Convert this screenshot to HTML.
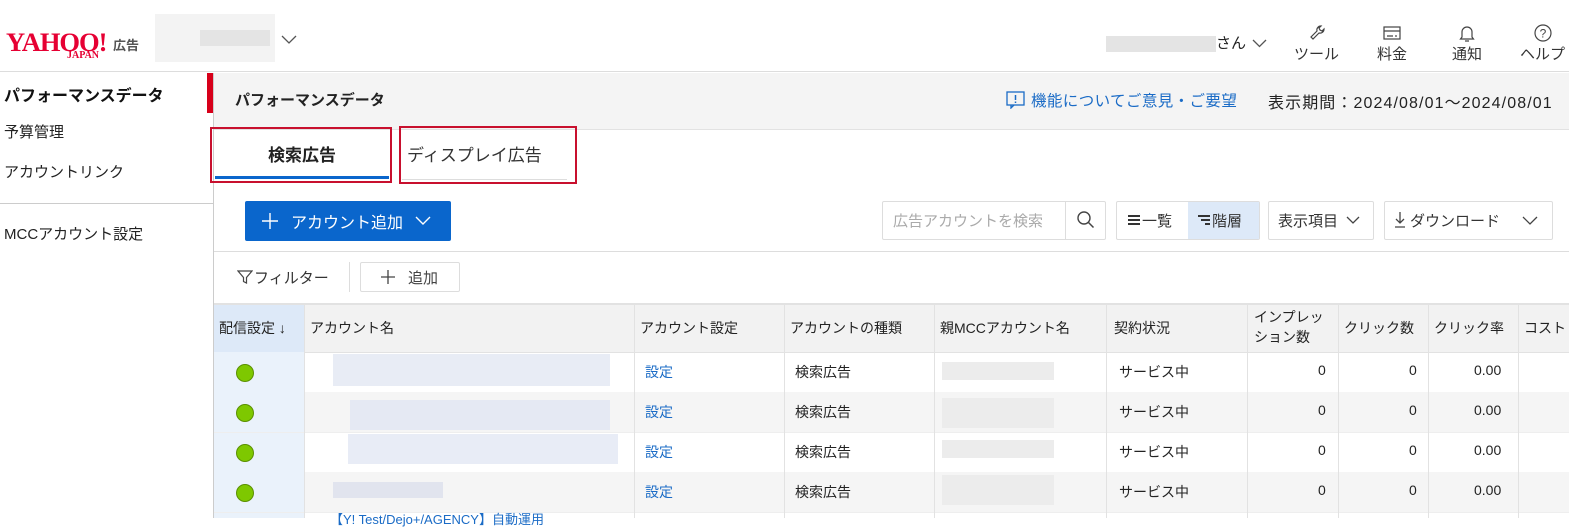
<!DOCTYPE html>
<html><head><meta charset="utf-8"><style>
*{box-sizing:border-box;margin:0;padding:0}
body{width:1569px;height:518px;overflow:hidden;background:#fff;font-family:"Liberation Sans","Noto Sans CJK JP",sans-serif;color:#222;position:relative;font-size:14px}
.a{position:absolute;white-space:nowrap}
.blur{position:absolute;background:#e6e6e6}
.bb{position:absolute;background:#e3e8f3}
</style></head><body>
<div class="a" style="left:0;top:0;width:1569px;height:72px;border-bottom:1px solid #ddd"></div>
<div class="a" style="left:6px;top:28px;font-family:'Liberation Serif',serif;font-weight:bold;font-size:26px;color:#e60033;letter-spacing:-1px;transform:scaleX(1.02);transform-origin:left">YAHOO!</div>
<div class="a" style="left:67px;top:50px;font-family:'Liberation Serif',serif;font-weight:bold;font-size:10px;color:#e60033">JAPAN</div>
<div class="a" style="left:113px;top:35px;font-size:13px;font-weight:bold;color:#555">広告</div>
<div class="blur" style="left:155px;top:14px;width:120px;height:48px;background:#f3f3f3"></div>
<div class="blur" style="left:200px;top:30px;width:70px;height:16px;background:#e4e4e4"></div>
<svg class="a" style="left:280px;top:34px" width="18" height="12"><path d="M2 2l7 7 7-7" fill="none" stroke="#555" stroke-width="1.3"/></svg>
<div class="blur" style="left:1106px;top:36px;width:110px;height:16px;background:#e4e4e4"></div>
<div class="a" style="left:1216px;top:32px;font-size:15px">さん</div>
<svg class="a" style="left:1251px;top:38px" width="17" height="11"><path d="M2 2l6.5 6.5 6.5-6.5" fill="none" stroke="#555" stroke-width="1.3"/></svg>
<svg class="a" style="left:1308px;top:23px" width="20" height="20"><path d="M13 3a4 4 0 0 0-4 5l-6 6 2 2 6-6a4 4 0 0 0 5-4l-2 2-2-1-1-2z" fill="none" stroke="#444" stroke-width="1.2"/></svg>
<div class="a" style="left:1294px;top:43px;font-size:15px;color:#333">ツール</div>
<svg class="a" style="left:1383px;top:25px" width="18" height="16"><rect x="1" y="2" width="16" height="12" fill="none" stroke="#444" stroke-width="1.2"/><path d="M1 6h16M4 11h6M13 10v2" stroke="#444" stroke-width="1.2"/></svg>
<div class="a" style="left:1377px;top:43px;font-size:15px;color:#333">料金</div>
<svg class="a" style="left:1458px;top:23px" width="18" height="20"><path d="M4 14V9a5 5 0 0 1 10 0v5l1.5 2h-13zM7 18h4" fill="none" stroke="#444" stroke-width="1.2"/></svg>
<div class="a" style="left:1452px;top:43px;font-size:15px;color:#333">通知</div>
<svg class="a" style="left:1533px;top:23px" width="20" height="20"><circle cx="10" cy="10" r="8" fill="none" stroke="#444" stroke-width="1.2"/><text x="10" y="14.5" font-size="12" text-anchor="middle" fill="#444" font-family="Liberation Sans">?</text></svg>
<div class="a" style="left:1520px;top:43px;font-size:15px;color:#333">ヘルプ</div>
<div class="a" style="left:213px;top:73px;width:1px;height:445px;background:#ccc"></div>
<div class="a" style="left:207px;top:73px;width:6px;height:40px;background:#d7001a"></div>
<div class="a" style="left:4px;top:82px;font-size:16px;font-weight:bold;color:#111">パフォーマンスデータ</div>
<div class="a" style="left:4px;top:121px;font-size:15px">予算管理</div>
<div class="a" style="left:4px;top:161px;font-size:15px">アカウントリンク</div>
<div class="a" style="left:0;top:203px;width:213px;height:1px;background:#ccc"></div>
<div class="a" style="left:4px;top:223px;font-size:15px">MCCアカウント設定</div>
<div class="a" style="left:214px;top:73px;width:1355px;height:57px;background:#f4f4f4;border-bottom:1px solid #e2e2e2"></div>
<div class="a" style="left:235px;top:89px;font-size:15px;font-weight:bold">パフォーマンスデータ</div>
<svg class="a" style="left:1006px;top:91px" width="20" height="18"><rect x="1" y="1" width="17" height="13" fill="none" stroke="#1a6bc6" stroke-width="1.3"/><path d="M5 14v3l3-3" fill="none" stroke="#1a6bc6" stroke-width="1.3"/><path d="M9.5 4v5M9.5 10.5v1.5" stroke="#1a6bc6" stroke-width="1.5"/></svg>
<div class="a" style="left:1031px;top:89px;font-size:15.5px;color:#1a6bc6;letter-spacing:0.4px">機能についてご意見・ご要望</div>
<div class="a" style="left:1268px;top:89px;font-size:16px;color:#222;letter-spacing:1.1px">表示期間：2024/08/01～2024/08/01</div>
<div class="a" style="left:210px;top:127px;width:182px;height:56px;border:2px solid #c8102e"></div>
<div class="a" style="left:215px;top:176px;width:174px;height:3px;background:#0a66cc"></div>
<div class="a" style="left:268px;top:141px;font-size:17px;font-weight:bold">検索広告</div>
<div class="a" style="left:399px;top:126px;width:178px;height:58px;border:2px solid #c8102e"></div>
<div class="a" style="left:402px;top:179px;width:165px;height:1px;background:#ddd"></div>
<div class="a" style="left:407px;top:141px;font-size:17px;color:#333">ディスプレイ広告</div>
<div class="a" style="left:245px;top:201px;width:206px;height:40px;background:#0a66cc;border-radius:2px"></div>
<svg class="a" style="left:261px;top:212px" width="18" height="18"><path d="M9 1v16M1 9h16" stroke="#fff" stroke-width="1.4"/></svg>
<div class="a" style="left:291px;top:209px;font-size:16px;color:#fff">アカウント追加</div>
<svg class="a" style="left:414px;top:215px" width="18" height="11"><path d="M2 2l7 7 7-7" fill="none" stroke="#fff" stroke-width="1.4"/></svg>
<div class="a" style="left:882px;top:201px;width:224px;height:39px;border:1px solid #ddd;border-radius:2px"></div>
<div class="a" style="left:1065px;top:201px;width:1px;height:39px;background:#ddd"></div>
<div class="a" style="left:893px;top:210px;font-size:15px;color:#aaa">広告アカウントを検索</div>
<svg class="a" style="left:1076px;top:210px" width="20" height="20"><circle cx="8" cy="8" r="6" fill="none" stroke="#444" stroke-width="1.4"/><path d="M12.5 12.5l5 5" stroke="#444" stroke-width="1.5"/></svg>
<div class="a" style="left:1116px;top:201px;width:144px;height:39px;border:1px solid #ddd;border-radius:2px"></div>
<div class="a" style="left:1188px;top:202px;width:71px;height:37px;background:#dde9f8"></div>
<svg class="a" style="left:1127px;top:214px" width="14" height="12"><path d="M1 2h12M1 6h12M1 10h12" stroke="#333" stroke-width="2"/></svg>
<div class="a" style="left:1142px;top:210px;font-size:15px;color:#333">一覧</div>
<svg class="a" style="left:1197px;top:214px" width="14" height="12"><path d="M1 2h12M4 6h9M8 10h5" stroke="#333" stroke-width="2"/></svg>
<div class="a" style="left:1212px;top:210px;font-size:15px;color:#333">階層</div>
<div class="a" style="left:1268px;top:201px;width:106px;height:39px;border:1px solid #ddd;border-radius:2px"></div>
<div class="a" style="left:1278px;top:210px;font-size:15px;color:#333">表示項目</div>
<svg class="a" style="left:1345px;top:215px" width="16" height="11"><path d="M2 2l6 6 6-6" fill="none" stroke="#444" stroke-width="1.3"/></svg>
<div class="a" style="left:1384px;top:201px;width:169px;height:39px;border:1px solid #ddd;border-radius:2px"></div>
<svg class="a" style="left:1393px;top:210px" width="14" height="20"><path d="M7 2v11M3 9l4 4 4-4M2 17h10" fill="none" stroke="#444" stroke-width="1.3"/></svg>
<div class="a" style="left:1410px;top:210px;font-size:15px;color:#333">ダウンロード</div>
<svg class="a" style="left:1521px;top:215px" width="18" height="11"><path d="M2 2l7 7 7-7" fill="none" stroke="#444" stroke-width="1.3"/></svg>
<div class="a" style="left:214px;top:251px;width:1355px;height:1px;background:#ddd"></div>
<svg class="a" style="left:237px;top:269px" width="16" height="16"><path d="M1 2h14l-5.5 6.5V14l-3-1.5v-4z" fill="none" stroke="#444" stroke-width="1.2"/></svg>
<div class="a" style="left:254px;top:267px;font-size:15px;color:#333">フィルター</div>
<div class="a" style="left:349px;top:262px;width:1px;height:30px;background:#ddd"></div>
<div class="a" style="left:360px;top:262px;width:100px;height:30px;border:1px solid #ddd;border-radius:2px"></div>
<svg class="a" style="left:380px;top:269px" width="16" height="16"><path d="M8 1v14M1 8h14" stroke="#444" stroke-width="1.3"/></svg>
<div class="a" style="left:408px;top:267px;font-size:15px;color:#444">追加</div>
<div class="a" style="left:214px;top:303px;width:1355px;height:50px;background:#f2f2f2;border-top:2px solid #e2e2e2;border-bottom:1px solid #e2e2e2"></div>
<div class="a" style="left:214px;top:305px;width:90px;height:47px;background:#dde9f8"></div>
<div class="a" style="left:214px;top:392px;width:1355px;height:40px;background:#f5f5f5"></div>
<div class="a" style="left:214px;top:472px;width:1355px;height:40px;background:#f5f5f5"></div>
<div class="a" style="left:214px;top:352px;width:90px;height:166px;background:#eaf2fb"></div>
<div class="a" style="left:214px;top:432px;width:1355px;height:1px;background:#eee"></div>
<div class="a" style="left:214px;top:512px;width:1355px;height:1px;background:#eee"></div>
<div class="a" style="left:304px;top:305px;width:1px;height:213px;background:#e2e2e2"></div>
<div class="a" style="left:634px;top:305px;width:1px;height:213px;background:#e2e2e2"></div>
<div class="a" style="left:784px;top:305px;width:1px;height:213px;background:#e2e2e2"></div>
<div class="a" style="left:934px;top:305px;width:1px;height:213px;background:#e2e2e2"></div>
<div class="a" style="left:1106px;top:305px;width:1px;height:213px;background:#e2e2e2"></div>
<div class="a" style="left:1247px;top:305px;width:1px;height:213px;background:#e2e2e2"></div>
<div class="a" style="left:1338px;top:305px;width:1px;height:213px;background:#e2e2e2"></div>
<div class="a" style="left:1428px;top:305px;width:1px;height:213px;background:#e2e2e2"></div>
<div class="a" style="left:1518px;top:305px;width:1px;height:213px;background:#e2e2e2"></div>
<div class="a" style="left:219px;top:318px;font-size:14px">配信設定 ↓</div>
<div class="a" style="left:310px;top:318px;font-size:14px">アカウント名</div>
<div class="a" style="left:640px;top:318px;font-size:14px">アカウント設定</div>
<div class="a" style="left:790px;top:318px;font-size:14px">アカウントの種類</div>
<div class="a" style="left:940px;top:318px;font-size:14px">親MCCアカウント名</div>
<div class="a" style="left:1114px;top:318px;font-size:14px">契約状況</div>
<div class="a" style="left:1254px;top:307px;font-size:14px;line-height:20px">インプレッ<br>ション数</div>
<div class="a" style="left:1344px;top:318px;font-size:14px">クリック数</div>
<div class="a" style="left:1434px;top:318px;font-size:14px">クリック率</div>
<div class="a" style="left:1524px;top:318px;font-size:14px">コスト</div>
<div class="bb" style="left:333px;top:354px;width:277px;height:32px;background:#e8ecf5"></div>
<div class="bb" style="left:350px;top:400px;width:260px;height:30px;background:#e5e9f3"></div>
<div class="bb" style="left:348px;top:434px;width:270px;height:30px;background:#e8ecf6"></div>
<div class="bb" style="left:333px;top:482px;width:110px;height:16px;background:#e1e4ee"></div>
<div class="blur" style="left:942px;top:362px;width:112px;height:18px;background:#ececec"></div>
<div class="blur" style="left:942px;top:398px;width:112px;height:30px;background:#ececec"></div>
<div class="blur" style="left:942px;top:440px;width:112px;height:18px;background:#ececec"></div>
<div class="blur" style="left:942px;top:475px;width:112px;height:30px;background:#ececec"></div>
<div class="a" style="left:330px;top:509px;font-size:13px;color:#1a6bc6">【Y! Test/Dejo+/AGENCY】自動運用</div>
<div class="a" style="left:236px;top:364px;width:18px;height:18px;border-radius:50%;background:#7ec800;border:1px solid #5a8f00"></div>
<div class="a" style="left:236px;top:404px;width:18px;height:18px;border-radius:50%;background:#7ec800;border:1px solid #5a8f00"></div>
<div class="a" style="left:236px;top:444px;width:18px;height:18px;border-radius:50%;background:#7ec800;border:1px solid #5a8f00"></div>
<div class="a" style="left:236px;top:484px;width:18px;height:18px;border-radius:50%;background:#7ec800;border:1px solid #5a8f00"></div>
<div class="a" style="left:645px;top:362px;color:#1a6bc6">設定</div>
<div class="a" style="left:645px;top:402px;color:#1a6bc6">設定</div>
<div class="a" style="left:645px;top:442px;color:#1a6bc6">設定</div>
<div class="a" style="left:645px;top:482px;color:#1a6bc6">設定</div>
<div class="a" style="left:795px;top:362px">検索広告</div>
<div class="a" style="left:795px;top:402px">検索広告</div>
<div class="a" style="left:795px;top:442px">検索広告</div>
<div class="a" style="left:795px;top:482px">検索広告</div>
<div class="a" style="left:1119px;top:362px">サービス中</div>
<div class="a" style="left:1119px;top:402px">サービス中</div>
<div class="a" style="left:1119px;top:442px">サービス中</div>
<div class="a" style="left:1119px;top:482px">サービス中</div>
<div class="a" style="left:1318px;top:362px">0</div><div class="a" style="left:1409px;top:362px">0</div><div class="a" style="left:1474px;top:362px">0.00</div>
<div class="a" style="left:1318px;top:402px">0</div><div class="a" style="left:1409px;top:402px">0</div><div class="a" style="left:1474px;top:402px">0.00</div>
<div class="a" style="left:1318px;top:442px">0</div><div class="a" style="left:1409px;top:442px">0</div><div class="a" style="left:1474px;top:442px">0.00</div>
<div class="a" style="left:1318px;top:482px">0</div><div class="a" style="left:1409px;top:482px">0</div><div class="a" style="left:1474px;top:482px">0.00</div>
</body></html>
